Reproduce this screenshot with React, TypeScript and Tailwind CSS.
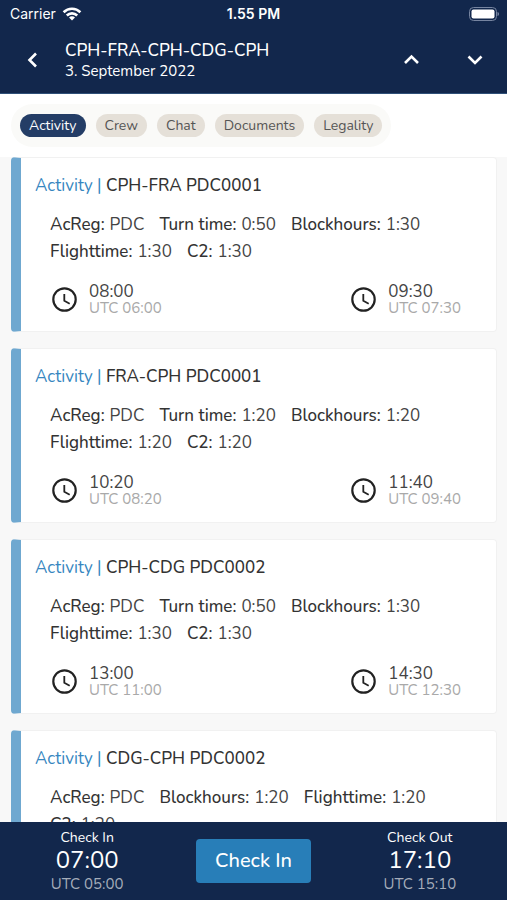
import clsx from 'clsx';

type Stat = [label: string, value: string];

type Leg = {
  title: string;
  stats: Stat[];
  start: string;
  startUtc: string;
  end: string;
  endUtc: string;
};

const tabs = ['Activity', 'Crew', 'Chat', 'Documents', 'Legality'];

const legs: Leg[] = [
  {
    title: 'CPH-FRA PDC0001',
    stats: [
      ['AcReg', 'PDC'],
      ['Turn time', '0:50'],
      ['Blockhours', '1:30'],
      ['Flighttime', '1:30'],
      ['C2', '1:30'],
    ],
    start: '08:00',
    startUtc: '06:00',
    end: '09:30',
    endUtc: '07:30',
  },
  {
    title: 'FRA-CPH PDC0001',
    stats: [
      ['AcReg', 'PDC'],
      ['Turn time', '1:20'],
      ['Blockhours', '1:20'],
      ['Flighttime', '1:20'],
      ['C2', '1:20'],
    ],
    start: '10:20',
    startUtc: '08:20',
    end: '11:40',
    endUtc: '09:40',
  },
  {
    title: 'CPH-CDG PDC0002',
    stats: [
      ['AcReg', 'PDC'],
      ['Turn time', '0:50'],
      ['Blockhours', '1:30'],
      ['Flighttime', '1:30'],
      ['C2', '1:30'],
    ],
    start: '13:00',
    startUtc: '11:00',
    end: '14:30',
    endUtc: '12:30',
  },
  {
    title: 'CDG-CPH PDC0002',
    stats: [
      ['AcReg', 'PDC'],
      ['Blockhours', '1:20'],
      ['Flighttime', '1:20'],
      ['C2', '1:20'],
    ],
    start: '15:20',
    startUtc: '13:20',
    end: '16:40',
    endUtc: '14:40',
  },
];

const Chevron = ({ d }: { d: string }) => (
  <svg
    className="size-6"
    viewBox="0 0 24 24"
    fill="none"
    stroke="currentColor"
    strokeWidth="2.6"
    aria-hidden="true"
  >
    <path d={d} />
  </svg>
);

const StatusBar = () => (
  <div className="grid h-7 grid-cols-3 items-center px-2 font-['Inter',sans-serif] text-sm">
    <div className="flex items-center gap-1.5 pl-0.5">
      Carrier
      <svg className="h-3.5 w-5" viewBox="0 0 20 14" fill="none" aria-hidden="true">
        <g stroke="currentColor" strokeWidth="2.6">
          <path d="M1.600 5.200a12 12 0 0 1 16.800 0" />
          <path d="M4.800 8.500a7.400 7.400 0 0 1 10.400 0" />
        </g>
        <path d="M10 13.600 7 10.600a4.200 4.200 0 0 1 6 0z" fill="currentColor" />
      </svg>
    </div>
    <div className="text-center font-semibold">1.55 PM</div>
    <svg className="h-3.5 w-[30px] justify-self-end" viewBox="1 0 30 14" aria-hidden="true">
      <rect x="1.5" y="0.5" width="27" height="13" rx="4" fill="none" stroke="#7684a0" />
      <rect x="3.5" y="2.5" width="23" height="9" rx="2" fill="#fff" />
      <path d="M29.500 5v4c1-.3 1.500-1 1.500-2s-.5-1.700-1.500-2z" fill="#7684a0" />
    </svg>
  </div>
);

const Header = () => (
  <header className="shrink-0 border-b border-[#2f5078] bg-[#12274c] text-white">
    <StatusBar />
    <div className="flex h-[65px] items-start pr-5 pl-[21px]">
      <button type="button" aria-label="Back" className="mt-5">
        <Chevron d="M15 5.500 8.500 12l6.500 6.500" />
      </button>
      <div className="mt-[13px] ml-5 grow">
        <h1 className="text-[17px] leading-5 font-medium">CPH-FRA-CPH-CDG-CPH</h1>
        <p className="text-[15px] leading-5">3. September 2022</p>
      </div>
      <div className="mt-5 flex gap-10">
        <button type="button" aria-label="Previous">
          <Chevron d="M6 15l6.500-6.500L19 15" />
        </button>
        <button type="button" aria-label="Next">
          <Chevron d="M5.500 8.500 12 15l6.500-6.500" />
        </button>
      </div>
    </div>
  </header>
);

const Time = ({ time, utc }: { time: string; utc: string }) => (
  <div className="flex items-start gap-3">
    <svg
      className="mt-1 size-[25px]"
      viewBox="0 0 25 25"
      fill="none"
      stroke="#222"
      aria-hidden="true"
    >
      <circle cx="12.5" cy="12.5" r="11.2" strokeWidth="2.2" />
      <path d="M12.300 7v6.800l5.400 2.900" strokeWidth="1.8" />
    </svg>
    <div className="min-w-[70px]">
      <div className="text-[17px] leading-[17px] text-[#444]">{time}</div>
      <div className="text-[15px] leading-[17px] text-[#a9a9a9]">UTC {utc}</div>
    </div>
  </div>
);

const LegCard = ({ leg }: { leg: Leg }) => (
  <article className="rounded border border-l-10 border-[#f1f1f1] border-l-[#6fa8d0] bg-white pt-4 pr-[35px] pb-3.5 pl-3.5">
    <h2 className="text-[17px] leading-6 font-medium text-[#333]">
      <span className="font-normal text-[#3686c0]">Activity | </span>
      {leg.title}
    </h2>
    <dl className="mt-[13px] ml-[15px] flex flex-wrap gap-x-[15px] text-[17px] leading-[27px] text-[#444]">
      {leg.stats.map(([label, value]) => (
        <div key={label} className="flex gap-[5px]">
          <dt className="font-medium text-[#333]">{label}:</dt>
          <dd>{value}</dd>
        </div>
      ))}
    </dl>
    <div className="mt-[18px] ml-[17px] flex justify-between">
      <Time time={leg.start} utc={leg.startUtc} />
      <Time time={leg.end} utc={leg.endUtc} />
    </div>
  </article>
);

const CheckTime = ({ label, time, utc }: { label: string; time: string; utc: string }) => (
  <div className="pt-0.5 text-center">
    <div className="text-sm leading-5">{label}</div>
    <div className="text-2xl leading-6">{time}</div>
    <div className="text-[15px] leading-6 text-[#a5adba]">UTC {utc}</div>
  </div>
);

const App = () => {
  return (
    <div className="flex h-screen flex-col bg-[#f8f8f8] font-['Nunito','Lato',sans-serif]">
      <Header />
      <nav className="shrink-0 bg-white px-[11px] py-2.5">
        <div className="flex w-fit gap-2.5 rounded-full bg-[#fafaf8] px-[9px] py-2.5">
          {tabs.map((tab, i) => (
            <button
              key={tab}
              type="button"
              className={clsx(
                'h-[23px] rounded-full px-[9px] text-sm',
                i === 0 ? 'bg-[#243d66] text-white' : 'bg-[#e5e0d8] text-[#555]'
              )}
            >
              {tab}
            </button>
          ))}
        </div>
      </nav>
      <main className="flex min-h-0 grow flex-col gap-4 overflow-hidden pr-2.5 pl-[11px]">
        {legs.map((leg) => (
          <LegCard key={leg.title} leg={leg} />
        ))}
      </main>
      <footer className="grid h-[78px] shrink-0 grid-cols-3 items-center bg-[#12274c] px-1 text-white">
        <CheckTime label="Check In" time="07:00" utc="05:00" />
        <button
          type="button"
          className="h-11 justify-self-center rounded bg-[#287eb8] px-[19px] text-xl font-medium"
        >
          Check In
        </button>
        <CheckTime label="Check Out" time="17:10" utc="15:10" />
      </footer>
    </div>
  );
};

export default App;
